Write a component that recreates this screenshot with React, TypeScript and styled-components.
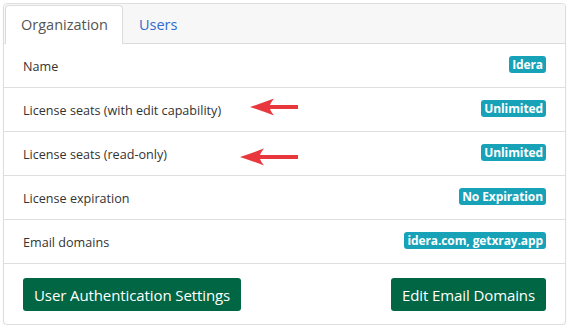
import React from "react";
import styled, { createGlobalStyle } from "styled-components";

const GlobalStyle = createGlobalStyle`
  body {
    margin: 0;
    background: #ffffff;
    font-family: "Open Sans", "Noto Sans", sans-serif;
  }
`;

type RowData = {
  label: string;
  value: string;
  arrow?: { left: number; top: number };
};

const rows: RowData[] = [
  { label: "Name", value: "Idera" },
  {
    label: "License seats (with edit capability)",
    value: "Unlimited",
    arrow: { left: 246, top: 10 },
  },
  {
    label: "License seats (read-only)",
    value: "Unlimited",
    arrow: { left: 236, top: 16 },
  },
  { label: "License expiration", value: "No Expiration" },
  { label: "Email domains", value: "idera.com, getxray.app" },
];

// red annotation arrow pointing left, ends at x=294
function Arrow({ left, top }: { left: number; top: number }) {
  const w = 294 - left;
  return (
    <ArrowMark style={{ left, top }} width={w} height="18" viewBox={`0 0 ${w} 18`}>
      <path
        d={`M0 9 Q12 5 24 0.5 Q21 4 20 7 L${w} 7 L${w} 11 L20 11 Q21 14 24 17.5 Q12 13 0 9 Z`}
        fill="#e8383d"
      />
    </ArrowMark>
  );
}

export default function App() {
  return (
    <Page>
      <GlobalStyle />
      <Card>
        <TabBar>
          <Tab $active>Organization</Tab>
          <Tab>Users</Tab>
        </TabBar>
        {rows.map((row) => (
          <Row key={row.label}>
            <Label>{row.label}</Label>
            {row.arrow && <Arrow left={row.arrow.left} top={row.arrow.top} />}
            <Badge>{row.value}</Badge>
          </Row>
        ))}
        <Footer>
          <Button>User Authentication Settings</Button>
          <Button>Edit Email Domains</Button>
        </Footer>
      </Card>
    </Page>
  );
}

const Page = styled.div`
  padding: 3px 3px 0 3px;
  width: 563px;
`;

const Card = styled.div`
  width: 561px;
  border: 1px solid #dedede;
  border-radius: 4px;
  background: #fff;
  box-shadow: 0 1px 2px rgba(0, 0, 0, 0.06);
`;

const TabBar = styled.div`
  display: flex;
  height: 38px;
  padding: 1px 0 0 1px;
  background: #f7f7f7;
  border-bottom: 1px solid #dcdcdc;
  border-radius: 4px 4px 0 0;
`;

const Tab = styled.div<{ $active?: boolean }>`
  display: flex;
  align-items: center;
  box-sizing: border-box;
  height: 39px;
  padding: 0 17px 1px 15px;
  font-size: 14.5px;
  color: ${(p) => (p.$active ? "#555" : "#2f6bd0")};
  background: ${(p) => (p.$active ? "#fff" : "transparent")};
  border: 1px solid ${(p) => (p.$active ? "#dcdcdc" : "transparent")};
  border-bottom: none;
  border-radius: 4px 4px 0 0;
  width: ${(p) => (p.$active ? "118px" : "auto")};
`;

const Row = styled.div`
  position: relative;
  display: flex;
  align-items: center;
  justify-content: space-between;
  height: 43px;
  padding: 0 19px 0 19px;
  border-bottom: 1px solid #dedede;
`;

const Label = styled.span`
  font-size: 12.6px;
  color: #333;
  margin-top: 2px;
`;

const ArrowMark = styled.svg`
  position: absolute;
`;

const Badge = styled.span`
  font-size: 12px;
  font-weight: 700;
  color: #fff;
  background: #17a2b8;
  border-radius: 3px;
  padding: 0 3px;
  line-height: 17px;
  letter-spacing: -0.1px;
  margin-top: -2px;
`;

const Footer = styled.div`
  display: flex;
  justify-content: space-between;
  padding: 14px 19px 13px 19px;
`;

const Button = styled.button`
  height: 33px;
  padding: 0 11px;
  border: none;
  border-radius: 3px;
  background: #006644;
  color: #fff;
  font-family: "Open Sans", "Noto Sans", sans-serif;
  font-size: 15px;
  letter-spacing: -0.1px;
`;
